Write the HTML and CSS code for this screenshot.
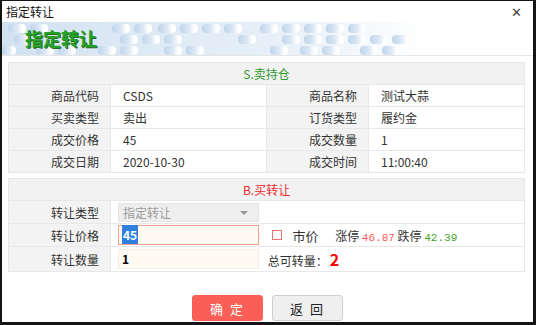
FILE: index.html
```html
<!DOCTYPE html>
<html>
<head>
    <title>指定转让</title>
    <link rel="stylesheet" href="styles.css">
</head>
<body>
    <div class="window">
        <div class="titlebar">
            <span class="title">指定转让</span>
            <span class="close">&#x2715;</span>
        </div>
        <div class="banner">
            <svg class="pattern" width="531" height="33" viewBox="0 0 531 33">
                <defs>
                    <linearGradient id="fade" x1="0" x2="1" y1="0" y2="0">
                        <stop offset="0" stop-color="#d2e2f1"/>
                        <stop offset="0.55" stop-color="#e9f1f9"/>
                        <stop offset="0.8" stop-color="#ffffff"/>
                    </linearGradient>
                    <linearGradient id="fadeRect" x1="0" x2="1" y1="0" y2="0">
                        <stop offset="0" stop-color="#bfd5eb"/>
                        <stop offset="0.5" stop-color="#dbe7f4"/>
                        <stop offset="0.8" stop-color="#ffffff"/>
                    </linearGradient>
                </defs>
                <rect width="531" height="33" fill="url(#fade)"/>
                <g fill="url(#fadeRect)">
                    <rect x="6" y="2" width="18" height="9" rx="4"/>
                    <rect x="28" y="2" width="18" height="9" rx="4"/>
                    <rect x="110" y="2" width="18" height="9" rx="4"/>
                    <rect x="132" y="2" width="18" height="9" rx="4"/>
                    <rect x="156" y="2" width="18" height="9" rx="4"/>
                    <rect x="178" y="2" width="18" height="9" rx="4"/>
                    <rect x="200" y="2" width="18" height="9" rx="4"/>
                    <rect x="222" y="2" width="18" height="9" rx="4"/>
                    <rect x="258" y="2" width="18" height="9" rx="4"/>
                    <rect x="280" y="2" width="18" height="9" rx="4"/>
                    <rect x="302" y="2" width="18" height="9" rx="4"/>
                    <rect x="324" y="2" width="18" height="9" rx="4"/>
                    <rect x="346" y="2" width="18" height="9" rx="4"/>
                    <rect x="12" y="13" width="18" height="9" rx="4"/>
                    <rect x="118" y="13" width="18" height="9" rx="4"/>
                    <rect x="140" y="13" width="18" height="9" rx="4"/>
                    <rect x="162" y="13" width="18" height="9" rx="4"/>
                    <rect x="236" y="13" width="18" height="9" rx="4"/>
                    <rect x="280" y="13" width="18" height="9" rx="4"/>
                    <rect x="302" y="13" width="18" height="9" rx="4"/>
                    <rect x="324" y="13" width="18" height="9" rx="4"/>
                    <rect x="346" y="13" width="18" height="9" rx="4"/>
                    <rect x="368" y="13" width="18" height="9" rx="4"/>
                    <rect x="390" y="13" width="18" height="9" rx="4"/>
                    <rect x="0" y="24" width="14" height="9" rx="4"/>
                    <rect x="34" y="24" width="18" height="9" rx="4"/>
                    <rect x="56" y="24" width="18" height="9" rx="4"/>
                    <rect x="96" y="24" width="18" height="9" rx="4"/>
                    <rect x="118" y="24" width="18" height="9" rx="4"/>
                    <rect x="162" y="24" width="18" height="9" rx="4"/>
                    <rect x="184" y="24" width="18" height="9" rx="4"/>
                    <rect x="268" y="24" width="18" height="9" rx="4"/>
                    <rect x="298" y="24" width="18" height="9" rx="4"/>
                    <rect x="320" y="24" width="18" height="9" rx="4"/>
                    <rect x="358" y="24" width="18" height="9" rx="4"/>
                    <rect x="380" y="24" width="18" height="9" rx="4"/>
                </g>
            </svg>
            <h1>指定转让</h1>
        </div>

        <div class="content">
            <table class="grid">
                <colgroup>
                    <col class="c-label"><col class="c-value"><col class="c-label"><col class="c-value">
                </colgroup>
                <tr class="head"><th colspan="4" class="sell">S.卖持仓</th></tr>
                <tr>
                    <td class="label">商品代码</td><td class="value">CSDS</td>
                    <td class="label">商品名称</td><td class="value">测试大蒜</td>
                </tr>
                <tr>
                    <td class="label">买卖类型</td><td class="value">卖出</td>
                    <td class="label">订货类型</td><td class="value">履约金</td>
                </tr>
                <tr>
                    <td class="label">成交价格</td><td class="value">45</td>
                    <td class="label">成交数量</td><td class="value">1</td>
                </tr>
                <tr>
                    <td class="label">成交日期</td><td class="value">2020-10-30</td>
                    <td class="label">成交时间</td><td class="value">11:00:40</td>
                </tr>
            </table>

            <table class="grid form">
                <colgroup>
                    <col class="c-label"><col class="c-value"><col class="c-label"><col class="c-value">
                </colgroup>
                <tr class="head"><th colspan="4" class="buy">B.买转让</th></tr>
                <tr>
                    <td class="label">转让类型</td>
                    <td class="field" colspan="3">
                        <div class="select">指定转让<span class="caret"></span></div>
                    </td>
                </tr>
                <tr>
                    <td class="label">转让价格</td>
                    <td class="field" colspan="3">
                        <div class="input active"><span class="sel">45</span></div>
                        <span class="check"></span>
                        <span class="market">市价</span>
                        <span class="limit">涨停 <b class="up">46.87</b> 跌停 <b class="down">42.39</b></span>
                    </td>
                </tr>
                <tr>
                    <td class="label">转让数量</td>
                    <td class="field" colspan="3">
                        <div class="input">1</div>
                        <span class="total">总可转量：<b>2</b></span>
                    </td>
                </tr>
            </table>

            <div class="actions">
                <button class="btn primary">确 定</button>
                <button class="btn">返 回</button>
            </div>
        </div>
    </div>
</body>
</html>
```

FILE: styles.css
```css
body {
    margin: 0;
    background: #141414;
    font-family: "Noto Sans CJK SC", "Microsoft YaHei", sans-serif;
    font-size: 12px;
    color: #333;
}

.window {
    margin: 1px 3px 0 2px;
    height: 321px;
    background: #fff;
    overflow: hidden;
}

.titlebar {
    height: 21px;
    display: flex;
    align-items: center;
    justify-content: space-between;
    padding: 0 11px 0 4px;
}

.title {
    font-size: 12px;
    color: #111;
}

.close {
    font-size: 13px;
    color: #444;
}

.banner {
    position: relative;
    height: 33px;
    border-bottom: 1px solid #e6e6e6;
}

.pattern {
    position: absolute;
    left: 0;
    top: 0;
}

.banner h1 {
    position: relative;
    margin: 0;
    padding-left: 23px;
    line-height: 33px;
    font-size: 18px;
    font-weight: bold;
    color: #25a125;
    text-shadow: 1px 1px 0 #2d6b2d;
}

.content {
    padding: 6px 8px 0 6px;
}

.grid {
    width: 517px;
    border-collapse: collapse;
    table-layout: fixed;
    border: 1px solid #e3e3e3;
    margin-bottom: 5px;
}

.c-label { width: 102px; }
.c-value { width: 156px; }

.grid th,
.grid td {
    border: 1px solid #e8e8e8;
    height: 21px;
    padding: 0;
    font-weight: normal;
}

.grid .head th {
    background: #f2f2f2;
    height: 21px;
    text-align: center;
}

.sell { color: #2f9a2f; }
.buy { color: #f02a2a; }

.grid .label {
    background: #f3f3f3;
    text-align: right;
    padding-right: 11px;
}

.grid .value {
    padding-left: 12px;
}

.form td {
    height: 22px;
}

.field {
    padding-left: 7px !important;
}

.field > * {
    vertical-align: middle;
}

.select {
    display: inline-flex;
    align-items: center;
    justify-content: space-between;
    box-sizing: border-box;
    width: 141px;
    height: 19px;
    padding: 0 10px 0 4px;
    background: #eeeeee;
    border: 1px solid #e4e4e4;
    color: #9a9a9a;
}

.caret {
    width: 0;
    height: 0;
    border-left: 4px solid transparent;
    border-right: 4px solid transparent;
    border-top: 4px solid #999;
}

.input {
    display: inline-block;
    box-sizing: border-box;
    width: 141px;
    height: 20px;
    line-height: 18px;
    padding-left: 3px;
    background: #fffaf1;
    border: 1px solid #f3eee3;
    font-weight: bold;
    color: #000;
}

.input.active {
    border-color: #f3a18f;
}

.sel {
    background: #2f7fe0;
    color: #fff;
    padding: 1px 1px;
}

.check {
    display: inline-block;
    box-sizing: border-box;
    width: 10px;
    height: 10px;
    margin-left: 10px;
    border: 1px solid #ec7474;
    background: #fff;
}

.market {
    margin-left: 8px;
    font-size: 13px;
}

.limit {
    margin-left: 14px;
}

.limit b {
    font-family: "Liberation Mono", monospace;
    font-size: 11px;
    font-weight: normal;
}

.up { color: #ff5a5a; }
.down { color: #3da52b; }

.total {
    margin-left: 6px;
}

.total b {
    color: #f00;
    font-size: 16px;
    margin-left: 2px;
}

.actions {
    display: flex;
    justify-content: center;
    gap: 9px;
    padding: 18px 0 0 2px;
}

.btn {
    width: 71px;
    height: 26px;
    border: 1px solid #cfcfcf;
    border-radius: 3px;
    background: #efefef;
    font-family: inherit;
    font-size: 13px;
    color: #222;
    letter-spacing: 2px;
}

.btn.primary {
    background: #fa5f57;
    border-color: #fa5f57;
    color: #fff;
}
```
